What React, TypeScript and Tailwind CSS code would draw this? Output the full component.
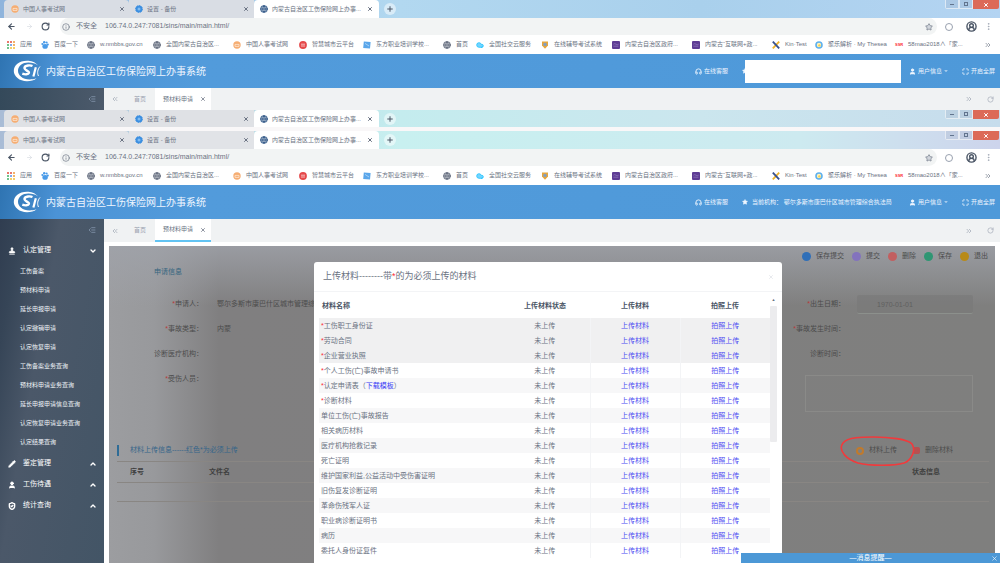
import React from 'react';
import {
  ArrowLeft,
  ArrowRight,
  ChevronDown,
  ChevronUp,
  ChevronsLeft,
  ChevronsRight,
  CircleUserRound,
  Cloud,
  Globe,
  Headphones,
  Info,
  ListIndentDecrease,
  Maximize,
  MoreVertical,
  Pencil,
  Plus,
  RotateCw,
  ShieldCheck,
  Star,
  Stamp,
  User,
  X,
} from 'lucide-react';

const bookmarks = [
  { label: '应用', icon: 'apps', width: 'w-[34px]' },
  { label: '百度一下', icon: 'blue', width: 'w-[46px]' },
  { label: 'w.nmbbs.gov.cn', icon: 'globe', width: 'w-[66px]' },
  { label: '全国内蒙古自治区...', icon: 'globe', width: 'w-[80px]' },
  { label: '中国人事考试网', icon: 'orange', width: 'w-[66px]' },
  { label: '智慧城市云平台', icon: 'red', width: 'w-[64px]' },
  { label: '东方职业培训学校...', icon: 'square', width: 'w-[80px]' },
  { label: '首页', icon: 'globe', width: 'w-[33px]' },
  { label: '全国社交云服务', icon: 'cloud', width: 'w-[65px]' },
  { label: '在线辅导考试系统', icon: 'badge', width: 'w-[71px]' },
  { label: '内蒙古自治区政府...', icon: 'purple', width: 'w-[80px]' },
  { label: '内蒙古“互联网+政...', icon: 'purple', width: 'w-[80px]' },
  { label: 'Kin·Test', icon: 'x', width: 'w-[43px]' },
  { label: '聚乐解析 · My Thesea', icon: 'ring', width: 'w-[80px]' },
  { label: '58mao2018∧「家...', icon: 'ssr', width: 'w-[80px]' },
];

const menuItems = [
  '工伤备案',
  '预材料申请',
  '延长申报申请',
  '认定撤销申请',
  '认定恢复申请',
  '工伤备案业务查询',
  '预材料申请业务查询',
  '延长申报申请信息查询',
  '认定恢复申请业务查询',
  '认定结果查询',
];

const materials = [
  { name: '工伤职工身份证', required: true },
  { name: '劳动合同', required: true },
  { name: '企业营业执照', required: true },
  { name: '个人工伤(亡)事故申请书', required: true },
  { name: '认定申请表', required: true, template: true },
  { name: '诊断材料', required: true },
  { name: '单位工伤(亡)事故报告' },
  { name: '相关病历材料' },
  { name: '医疗机构抢救记录' },
  { name: '死亡证明' },
  { name: '维护国家利益,公益活动中受伤害证明' },
  { name: '旧伤复发诊断证明' },
  { name: '革命伤残军人证' },
  { name: '职业病诊断证明书' },
  { name: '病历' },
  { name: '委托人身份证复件' },
];

const actions = [
  { label: '保存提交', color: 'bg-[#2f6fb8]' },
  { label: '提交', color: 'bg-[#8373bd]' },
  { label: '删除', color: 'bg-[#c25f60]' },
  { label: '保存', color: 'bg-[#2f9673]' },
  { label: '退出', color: 'bg-[#b88a18]' },
];

const BookmarkIcon = ({ kind }: { kind: string }) => {
  switch (kind) {
    case 'apps':
      return (
        <svg viewBox="0 0 8 8" className="size-2 shrink-0">
          {['#e9776c', '#e9776c', '#f3b26b', '#6fc48c', '#7fa9ee', '#f3b26b', '#6fc48c', '#f5cf6a', '#f5cf6a'].map((c, i) => (
            <rect key={i} x={(i % 3) * 3} y={Math.floor(i / 3) * 3} width="2" height="2" fill={c} />
          ))}
        </svg>
      );
    case 'globe':
      return <Globe className="size-2 shrink-0 rounded-full bg-gray-300 text-gray-500" strokeWidth={3} />;
    case 'blue':
      return (
        <svg viewBox="0 0 8 8" className="size-2 shrink-0" fill="#4a9be8">
          <circle cx="1.4" cy="3" r="1.1" />
          <circle cx="3.2" cy="1.3" r="1.2" />
          <circle cx="5.6" cy="1.5" r="1.1" />
          <circle cx="6.8" cy="3.6" r="1.1" />
          <ellipse cx="4.1" cy="5.4" rx="2.7" ry="2.4" />
        </svg>
      );
    case 'orange':
      return (
        <svg viewBox="0 0 8 8" className="size-2 shrink-0">
          <circle cx="4" cy="4" r="3.7" fill="#f6ad72" />
          <path d="M2 3.4h4v2H2z" fill="none" stroke="#fde6d2" strokeWidth=".8" />
        </svg>
      );
    case 'red':
      return (
        <svg viewBox="0 0 8 8" className="size-2 shrink-0">
          <circle cx="4" cy="4" r="3.9" fill="#e5484a" />
          <path d="M2 3.2h4M2 5h4" stroke="#fbdada" strokeWidth=".8" />
        </svg>
      );
    case 'square':
      return (
        <svg viewBox="0 0 8 8" className="size-2 shrink-0">
          <path d="M.8.4 7.6 1 7 7.6.2 7z" fill="#5aa6ea" />
          <path d="M2 2.4l4 2.6" stroke="#b9dbf8" strokeWidth=".8" />
        </svg>
      );
    case 'cloud':
      return <Cloud className="size-2 shrink-0 fill-sky-300 text-sky-400" strokeWidth={2} />;
    case 'badge':
      return (
        <svg viewBox="0 0 8 8" className="size-2 shrink-0">
          <path d="M1 .6h6v4L4 7.8 1 4.6z" fill="#e5a53d" />
          <circle cx="4" cy="3.4" r="1.7" fill="#7f9fc4" />
        </svg>
      );
    case 'purple':
      return (
        <svg viewBox="0 0 8 8" className="size-2 shrink-0">
          <rect width="8" height="8" rx="1" fill="#5e3c94" />
          <path d="M1.4 3.2q1.3-1 2.6 0t2.6 0M1.4 5.2h5" stroke="#9c86c4" strokeWidth=".6" fill="none" />
        </svg>
      );
    case 'x':
      return (
        <svg viewBox="0 0 8 8" className="size-2 shrink-0" strokeWidth="1.8">
          <path d="M7.2.6.8 7.4" stroke="#f0b429" />
          <path d="M.8.6l6.4 6.8" stroke="#36508f" />
        </svg>
      );
    case 'ring':
      return (
        <svg viewBox="0 0 8 8" className="size-2 shrink-0">
          <circle cx="4" cy="4" r="3" fill="#fff3bf" stroke="#5eb0ee" strokeWidth="1.6" />
          <circle cx="4.4" cy="4.4" r="1.2" fill="#f2cf52" />
        </svg>
      );
    default:
      return <span className="w-2 shrink-0 text-[4px] font-bold text-red-500">SSR</span>;
  }
};

const TabStrip = ({ tone, tabTone }: { tone: string; tabTone: string }) => (
  <div className={`flex h-[18px] shrink-0 items-stretch pl-1 text-[6px] text-gray-500 ${tone}`}>
    <div className={`flex w-[125px] items-center gap-1 rounded-t pr-1 pl-[7px] ${tabTone}`}>
      <BookmarkIcon kind="orange" />
      <span className="flex-1">中国人事考试网</span>
      <button aria-label="关闭">
        <X className="size-[6px]" strokeWidth={4} />
      </button>
    </div>
    <div className={`flex w-[125px] items-center gap-1 pr-[5px] pl-[6px] ${tabTone}`}>
      <svg viewBox="0 0 8 8" className="size-2 shrink-0">
        <circle cx="4" cy="4" r="2.5" fill="#7fbcf3" stroke="#3d8fe0" strokeWidth="2" />
        <circle cx="4" cy="4" r="3.4" fill="none" stroke="#3d8fe0" strokeDasharray="1.3 1.3" />
      </svg>
      <span className="flex-1">设置 - 备份</span>
      <button aria-label="关闭">
        <X className="size-[6px]" strokeWidth={4} />
      </button>
    </div>
    <div className="flex w-[125px] items-center gap-1 rounded-t bg-white px-[6px]">
      <Globe className="size-2 shrink-0 rounded-full bg-slate-300 text-[#3b5f8c]" strokeWidth={3} />
      <span className="whitespace-nowrap">内蒙古自治区工伤保险网上办事...</span>
      <button aria-label="关闭" className="ml-auto">
        <X className="size-[6px]" strokeWidth={4} />
      </button>
    </div>
    <button aria-label="新标签页" className="ml-[5px] flex size-3 items-center justify-center self-center rounded-full bg-white/50">
      <Plus className="size-2 text-gray-600" strokeWidth={3} />
    </button>
    <div className="mr-px ml-auto flex h-[9px] overflow-hidden rounded-b-[2px] text-slate-500">
      <button aria-label="最小化" className="flex w-[14px] items-center justify-center border border-t-0 border-white/60 bg-slate-400/20">
        <span className="h-px w-1 bg-slate-500" />
      </button>
      <button aria-label="最大化" className="flex w-[14px] items-center justify-center border border-t-0 border-white/60 bg-slate-400/20">
        <span className="size-1 border border-slate-500" />
      </button>
      <button aria-label="关闭窗口" className="flex w-[26px] items-center justify-center bg-[#dc6a58]">
        <X className="size-[6px] text-white" strokeWidth={4} />
      </button>
    </div>
  </div>
);

const AddressBar = ({ id }: { id: string }) => (
  <div className="flex h-[17px] shrink-0 items-center bg-white text-[7px] text-gray-500">
    <div className="flex w-15 items-center pl-[7px]">
      <ArrowLeft className="size-[9px] text-gray-600" strokeWidth={3} />
      <ArrowRight className="ml-[10px] size-[7px] text-gray-300" />
      <RotateCw className="ml-2 size-[9px] text-gray-600" strokeWidth={3} />
    </div>
    <div className="flex h-full flex-1 items-center rounded-full bg-[#f2f4f4] pr-1 pl-[2px]">
      <Info className="size-2" />
      <label htmlFor={id} className="ml-[6px] w-[29px]">
        不安全
      </label>
      <input
        id={id}
        readOnly
        className="min-w-0 flex-1 bg-transparent outline-none"
        defaultValue="106.74.0.247:7081/sins/main/main.html/"
      />
      <Star className="size-2 fill-gray-300" />
    </div>
    <div className="flex w-[63px] items-center pl-2">
      <span className="size-2 rounded-full border border-gray-400" />
      <CircleUserRound className="ml-[13px] size-[11px] text-gray-600" strokeWidth={3} />
      <MoreVertical className="ml-[7px] size-[9px] text-gray-400" />
    </div>
  </div>
);

const BookmarkBar = () => (
  <nav className="flex h-[19px] shrink-0 items-center overflow-hidden bg-white pl-[7px] text-[6px] text-gray-500">
    {bookmarks.map((b) => (
      <a key={b.label} href="#" className={`flex shrink-0 items-center gap-[5px] whitespace-nowrap ${b.width}`}>
        <BookmarkIcon kind={b.icon} />
        {b.label}
      </a>
    ))}
    <ChevronsRight className="mr-2 ml-auto size-2" />
  </nav>
);

const AppHeader = ({ covered }: { covered?: boolean }) => (
  <header className="flex h-[34px] shrink-0 items-center bg-[linear-gradient(100deg,#2f74b2_0,#4b93d6_60px,#529bdb_200px,#4e99d9_100%)] pr-[5px] pl-[13px] text-[6px] text-blue-50">
    <svg viewBox="0 0 28 22" className="h-[22px] w-7 shrink-0">
      <path
        d="M25 5.5C22 1.8 18 .8 14 .8 6 .8 .8 5.6.8 11S6.4 21.2 14 21.2c4 0 7-.8 9.6-3-2 .8-4.600 1.200-7 1.200C9.600 19.400 5 15.600 5 10.800S9.600 2.600 15.400 2.600c3.800 0 7 .9 9.600 2.900z"
        fill="#fff"
      />
      <path d="M19.500 6c-2-.9-7.500-1-8 1.800-.4 2.600 5 3 4.400 5.200-.5 1.600-4 1.700-6.600.6" fill="none" stroke="#fff" strokeWidth="2.400" />
      <path d="M22.800 7.200 20.400 16.500" stroke="#fff" strokeWidth="2.200" />
      <path d="M27 6.500c-2.500 3-3 6.500-1.500 9.500" fill="none" stroke="#fff" strokeWidth="1" />
    </svg>
    <h1 className="ml-[5px] flex-1 text-[10px] whitespace-nowrap">内蒙古自治区工伤保险网上办事系统</h1>
    <a href="#" className="flex items-center gap-[2px]">
      <Headphones className="size-[7px]" strokeWidth={3} />
      在线客服
    </a>
    <div className="relative ml-[14px] flex w-[154px] items-center gap-1 whitespace-nowrap">
      <Star className="size-[6px] shrink-0 fill-current" />
      当前机构： 鄂尔多斯市康巴什区城市管理综合执法局
      {covered && <div className="absolute -top-[7px] left-[3px] h-[23px] w-[156px] bg-white" />}
    </div>
    <button className="ml-[13px] flex items-center gap-[2px]">
      <User className="size-[7px] fill-current" strokeWidth={3} />
      用户信息
      <ChevronDown className="size-1 fill-current" strokeWidth={4} />
    </button>
    <button className="ml-[14px] flex items-center gap-[2px]">
      <Maximize className="size-[7px]" strokeWidth={3} />
      开启全屏
    </button>
  </header>
);

const PageTabs = ({ active }: { active?: boolean }) => (
  <div className="flex min-w-0 flex-1 items-stretch bg-[#f0f2f3] text-[6px] text-gray-400">
    <button aria-label="向左" className="w-[22px] pl-[7px]">
      <ChevronsLeft className="size-2" />
    </button>
    <a href="#" className="flex w-[29px] items-center pl-2">
      首页
    </a>
    <div className={`flex w-[56px] items-center justify-between bg-white pr-[5px] pl-2 text-gray-500 ${active ? 'border-b-2 border-[#62c3f2]' : ''}`}>
      <span>预材料申请</span>
      <X className="size-[6px]" strokeWidth={3} />
    </div>
    <button aria-label="向右" className="ml-auto">
      <ChevronsRight className="size-2" />
    </button>
    <button aria-label="刷新" className="mr-[6px] ml-[14px]">
      <RotateCw className="size-[7px]" />
    </button>
  </div>
);

const MenuHead = ({ icon, label, open }: { icon: React.ReactNode; label: string; open?: boolean }) => (
  <button className="flex h-[21px] w-full items-center pr-[7px] pl-2 text-[7px] text-white">
    {icon}
    <span className="ml-[7px] flex-1 text-left">{label}</span>
    {open ? <ChevronDown className="size-2" strokeWidth={4} /> : <ChevronUp className="size-2" strokeWidth={4} />}
  </button>
);

const Sidebar = () => (
  <aside className="w-[104px] shrink-0 bg-[linear-gradient(100deg,#303d50_0,#364557_22px,#4b5869_60px,#435566_100%)]">
    <div className="flex h-[21px] items-center justify-end pr-2 text-slate-400">
      <ListIndentDecrease className="size-2" />
    </div>
    <MenuHead open icon={<Stamp className="size-2 fill-current" />} label="认定管理" />
    <ul className="py-px text-[6px] text-slate-100">
      {menuItems.map((item) => (
        <li key={item} className="h-[19px]">
          <a href="#" className="flex h-full items-center pl-5">
            {item}
          </a>
        </li>
      ))}
    </ul>
    <MenuHead icon={<Pencil className="size-2 fill-current" />} label="鉴定管理" />
    <MenuHead icon={<User className="size-2 fill-current" strokeWidth={3} />} label="工伤待遇" />
    <MenuHead icon={<ShieldCheck className="size-2" strokeWidth={4} />} label="统计查询" />
  </aside>
);

const FieldLabel = ({ htmlFor, text, required, width }: { htmlFor: string; text: string; required?: boolean; width: string }) => (
  <label htmlFor={htmlFor} className={`shrink-0 text-right ${width}`}>
    {required && <span className="text-[#b83a3a]">*</span>}
    {text}
  </label>
);

const ApplyForm = () => (
  <form className="text-[7px] text-[#4c4c4c]">
    <div className="flex h-5 items-center justify-end gap-2 pr-[7px]">
      {actions.map((a) => (
        <button key={a.label} type="button" className="flex items-center gap-[5px]">
          <span className={`size-[9px] rounded-full ${a.color}`} />
          {a.label}
        </button>
      ))}
    </div>
    <h2 className="flex h-3 items-center pl-[45px] text-[#35657f]">申请信息</h2>
    <div className="mt-[14px] flex">
      <div className="flex-1">
        <div className="flex h-[25px] items-center gap-[14px]">
          <FieldLabel htmlFor="applicant" text="申请人：" required width="w-[94px]" />
          <input id="applicant" className="w-[120px] outline-none" defaultValue="鄂尔多斯市康巴什区城市管理综合" />
        </div>
        <div className="flex h-[25px] items-center gap-[14px]">
          <FieldLabel htmlFor="kind" text="事故类型：" required width="w-[94px]" />
          <input id="kind" className="w-[90px] outline-none" defaultValue="内蒙" />
        </div>
        <div className="flex h-[25px] items-center gap-[14px]">
          <FieldLabel htmlFor="hospital" text="诊断医疗机构：" width="w-[94px]" />
          <input id="hospital" className="w-[90px] outline-none" />
        </div>
        <div className="flex h-[25px] items-center gap-[14px]">
          <FieldLabel htmlFor="process" text="受伤人员：" required width="w-[94px]" />
          <input id="process" className="w-[90px] outline-none" />
        </div>
      </div>
      <div className="w-[210px] shrink-0">
        <div className="flex h-[25px] items-center gap-3">
          <FieldLabel htmlFor="birth" text="出生日期：" required width="w-[60px]" />
          <input
            id="birth"
            className="h-[19px] w-[116px] rounded-[2px] border-b border-[#8c908c] bg-[#787878]/60 pl-5 text-[#606060] outline-none"
            defaultValue="1970-01-01"
          />
        </div>
        <div className="flex h-[25px] items-center gap-3">
          <FieldLabel htmlFor="accident" text="事故发生时间：" required width="w-[60px]" />
          <input id="accident" className="w-[116px] outline-none" />
        </div>
        <div className="flex h-[25px] items-center gap-3">
          <FieldLabel htmlFor="diagnosis" text="诊断时间：" width="w-[60px]" />
          <input id="diagnosis" className="w-[116px] outline-none" />
        </div>
        <textarea aria-label="受伤经过" className="mt-2 ml-5 block h-[37px] w-[168px] resize-none border border-[#8a8a88] outline-none" />
      </div>
    </div>

    <div className="mt-7 flex h-[21px] items-center pr-[42px] pl-2">
      <span className="h-[11px] w-[2px] bg-[#2f6c96]" />
      <h2 className="ml-[11px] flex-1 text-[#35658a]">材料上传信息------红色*为必须上传</h2>
      <button type="button" className="relative flex items-center gap-[5px]">
        <span className="size-2 rounded-full border-2 border-[#c07a2c]" />
        材料上传
        <svg viewBox="0 0 76 32" className="absolute -top-[10px] -left-4 h-8 w-[76px] max-w-none" fill="none">
          <path d="M3 8C8 2 22 2 34 2c14 0 34 2 38 7 4 6 0 16-8 19-10 3-34 3-46 0C8 25-3 16 3 8z" stroke="#f13a3c" strokeWidth="1.6" />
        </svg>
      </button>
      <button type="button" className="ml-4 flex items-center gap-[5px]">
        <span className="size-[7px] rounded-[2px] bg-[#b85050]" />
        删除材料
      </button>
    </div>
    <table className="mr-[6px] ml-2 w-[calc(100%-14px)] table-fixed border-y border-[#898683] text-left">
      <thead>
        <tr className="h-[21px] border-b border-[#898683] text-[#3f3f3f]">
          <th className="w-[92px] pl-[13px]">序号</th>
          <th>文件名</th>
          <th className="w-[77px]">状态信息</th>
        </tr>
      </thead>
      <tbody>
        <tr className="h-[19px]">
          <td />
          <td />
          <td />
        </tr>
      </tbody>
    </table>
  </form>
);

const UploadDialog = () => (
  <section
    role="dialog"
    aria-labelledby="upload-title"
    className="absolute top-4 right-[213px] bottom-0 left-[205px] overflow-hidden rounded-t-[3px] bg-white text-[7px] text-gray-500"
  >
    <div className="flex h-[30px] items-center justify-between border-b border-gray-100 pr-2 pl-[9px]">
      <h2 id="upload-title" className="text-[9px]">
        上传材料--------带<span className="text-red-500">*</span>的为必须上传的材料
      </h2>
      <button aria-label="关闭" className="text-gray-300">
        <X className="size-[6px]" />
      </button>
    </div>
    <div className="flex pt-[2px] pr-[5px] pl-[5px]">
      <table className="flex-1 table-fixed">
        <thead>
          <tr className="h-6 text-gray-600">
            <th className="pl-[3px] text-left">材料名称</th>
            <th className="w-[90px]">上传材料状态</th>
            <th className="w-[90px]">上传材料</th>
            <th className="w-[90px]">拍照上传</th>
          </tr>
        </thead>
        <tbody>
          {materials.map((m, i) => (
            <tr key={m.name} className={`h-[15px] text-center ${i < 3 ? 'bg-[#f0f0f1]' : i % 2 === 0 ? 'bg-[#f7f7f8]' : 'bg-white'}`}>
              <td className="pl-[2px] text-left leading-[15px]">
                {m.required && <span className="text-red-500">*</span>}
                {m.name}
                {m.template && (
                  <>
                    （
                    <a href="#" className="text-[#3a3af5]">
                      下载模板
                    </a>
                    ）
                  </>
                )}
              </td>
              <td className="leading-[15px]">未上传</td>
              <td className="border-l border-gray-100 leading-[15px]">
                <a href="#" className="text-[#4b4bf2]">
                  上传材料
                </a>
              </td>
              <td className="border-l border-gray-100 leading-[15px]">
                <a href="#" className="text-[#4b4bf2]">
                  拍照上传
                </a>
              </td>
            </tr>
          ))}
        </tbody>
      </table>
      {/* scroll track */}
      <div className="mt-1 flex w-[7px] flex-col items-center gap-1">
        <span className="text-[4px] leading-none text-gray-500">▲</span>
        <span className="h-[136px] w-[7px] rounded-[1px] bg-[#ececee]" />
      </div>
    </div>
  </section>
);

const App: React.FC = () => {
  return (
    <div className="flex h-screen flex-col overflow-hidden bg-white font-['Liberation_Sans','Noto_Sans_CJK_SC',sans-serif]">
      {/* Upper window */}
      <TabStrip tone="bg-[linear-gradient(90deg,#8fb4dc_0,#b2d8f0_40%,#a9d0ec_70%,#b4d4f2_100%)]" tabTone="bg-[#d9dde4]" />
      <AddressBar id="address-top" />
      <BookmarkBar />
      <AppHeader covered />
      <div className="flex h-[22px] shrink-0">
        <div className="flex w-[104px] shrink-0 items-center justify-end bg-[linear-gradient(90deg,#34495a,#4c5a6b)] pr-2 text-slate-400">
          <ListIndentDecrease className="size-2" />
        </div>
        <PageTabs />
      </div>

      <TabStrip tone="-mb-px bg-[linear-gradient(90deg,#a9bcd6_0,#c4ecee_40%,#cbe6ee_70%,#c6dcec_100%)]" tabTone="bg-[#dfe1e5]" />
      <div className="h-1 shrink-0 bg-[#f9f7f8]" />

      {/* Lower window */}
      <TabStrip tone="bg-[linear-gradient(90deg,#a9bcd6_0,#c8f0f0_40%,#cdeaf0_80%,#cdd4ec_100%)]" tabTone="bg-[#e1e3e7]" />
      <AddressBar id="address-bottom" />
      <BookmarkBar />
      <AppHeader />
      <div className="flex min-h-0 flex-1">
        <Sidebar />
        <div className="flex min-w-0 flex-1 flex-col">
          <div className="flex h-[23px] shrink-0">
            <PageTabs active />
          </div>
          <main className="relative mx-[5px] mt-1 min-h-0 flex-1 bg-[linear-gradient(180deg,rgba(160,163,170,.8)_0,rgba(128,127,127,0)_60px),linear-gradient(90deg,#9c9da0_0,#98999c_45px,#807f80_110px,#7f7f7e_100%)]">
            <ApplyForm />
            <UploadDialog />
            <button className="absolute -right-[5px] bottom-0 flex h-[10px] w-[259px] items-center justify-center bg-[#4c98d6] text-[7px] leading-[10px] text-white">
              —消息提醒—
              <X className="absolute top-[2px] right-[2px] size-[7px]" />
            </button>
          </main>
        </div>
      </div>
    </div>
  );
};

export default App;
